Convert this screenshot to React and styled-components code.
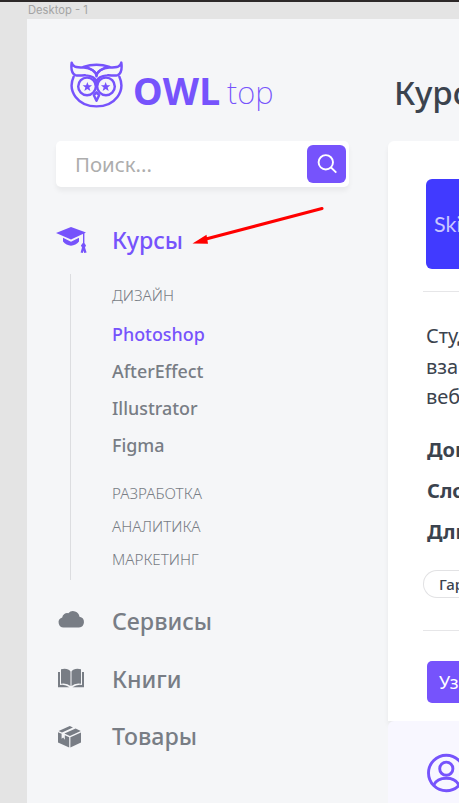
import React from "react";
import styled, { createGlobalStyle } from "styled-components";

const violet = "#7653fc";
const gray = "#787d85";
const ink = "#3b434e";

const GlobalStyle = createGlobalStyle`
  * { box-sizing: border-box; }
  body { margin: 0; font-family: "Noto Sans", "Open Sans", sans-serif; }
`;

const Workspace = styled.div`
  position: relative;
  width: 459px;
  height: 803px;
  overflow: hidden;
  background: #e4e4e4;
  border-top: 2px solid #2c2828;
  padding-left: 27px;
`;

const FrameLabel = styled.div`
  height: 17px;
  padding-left: 1px;
  font: 400 11.2px/17px Inter, sans-serif;
  color: #a3a3a3;
`;

const Frame = styled.div`
  display: grid;
  grid-template-columns: 361px 1fr;
  height: 784px;
  background: #f5f6f8;
`;

const Sidebar = styled.aside`
  padding: 40px 0 0 29px;
`;

const Logo = styled.div`
  display: flex;
  height: 82px;
  padding-left: 13px;
  white-space: nowrap;
  color: ${violet};
  svg { flex: none; margin: 1px 9px 0 0; }
`;

const LogoBold = styled.span`
  font-size: 37.5px;
  font-weight: 700;
  line-height: 63px;
  letter-spacing: 0.4px;
  width: 94px;
`;

const LogoThin = styled.span`
  font-size: 31px;
  font-weight: 200;
  line-height: 66px;
`;

const Search = styled.div`
  display: flex;
  justify-content: space-between;
  align-items: center;
  width: 293px;
  height: 46px;
  padding: 0 3px 0 19px;
  border-radius: 5px;
  background: #fff;
  box-shadow: 0 4px 5px rgba(0, 0, 0, 0.05);
  font-size: 20.4px;
  line-height: 45px;
  color: #adadad;
`;

const SearchButton = styled.button`
  display: grid;
  place-items: center;
  width: 39px;
  height: 38px;
  padding: 0;
  border: 0;
  border-radius: 6px;
  background: ${violet};
`;

const Menu = styled.nav`
  margin-top: 24px;
`;

const MenuItem = styled.div`
  display: flex;
  align-items: center;
  height: 57.5px;
  font-size: 23.2px;
  font-weight: 480;
  color: ${(p) => (p.$active ? violet : gray)};
  svg { flex: none; margin-right: 24px; }
`;

const SubMenu = styled.div`
  height: 306px;
  margin: 5px 0 13px 14px;
  padding: 5px 0 0 41px;
  border-left: 1px solid #dcdde0;
`;

const Category = styled.div`
  height: 33px;
  font-size: 15.2px;
  font-weight: 300;
  line-height: 33px;
  color: ${gray};
`;

const Links = styled.div`
  padding: 4px 0 13px;
`;

const SubLink = styled.div`
  height: 37px;
  font-size: 17.9px;
  font-weight: 480;
  line-height: 36px;
  color: ${(p) => (p.$active ? violet : gray)};
`;

const Main = styled.main`
  min-width: 0;
  white-space: nowrap;
  color: ${ink};
`;

const Title = styled.h1`
  margin: 0;
  height: 122px;
  padding: 49px 0 0 6px;
  font-size: 33px;
  font-weight: 500;
  line-height: 50px;
`;

const Card = styled.section`
  height: 580px;
  padding: 38px 0 0 35px;
  border-radius: 6px 0 0 0;
  background: #fff;
  box-shadow: 0 4px 5px rgba(0, 0, 0, 0.06);
`;

const Cover = styled.div`
  height: 90px;
  margin-left: 3px;
  padding-left: 8px;
  border-radius: 6px 0 0 6px;
  background: #413aff;
  font: 400 21.5px/90px Lato, sans-serif;
  color: #c9c7ff;
`;

const Rule = styled.div`
  height: 1px;
  margin-top: ${(p) => p.$top}px;
  background: #e6e6e8;
`;

const Description = styled.div`
  padding: 29px 0 0 3px;
  font-size: 20px;
  line-height: 30.5px;
`;

const Facts = styled.div`
  padding: 16px 0 1px 4px;
  font-size: 20px;
  font-weight: 700;
  line-height: 41px;
`;

const Chip = styled.div`
  height: 28px;
  margin-top: 17px;
  padding-left: 15px;
  border: 1px solid #e2e2e4;
  border-right: 0;
  border-radius: 14px 0 0 14px;
  font-size: 15px;
  font-weight: 500;
  line-height: 26px;
`;

const Action = styled.div`
  height: 42px;
  margin: 30px 0 0 4px;
  padding-left: 12px;
  border-radius: 5px 0 0 5px;
  background: ${violet};
  color: #fff;
  font-size: 18px;
  line-height: 42px;
`;

const Reviews = styled.section`
  height: 82px;
  padding: 32px 0 0 38px;
  overflow: hidden;
  border-radius: 6px 0 0 0;
  background: #f8f7ff;
`;

const Arrow = styled.svg`
  position: absolute;
  left: 190px;
  top: 203px;
`;

const STAR = "M0-9 L2.4-2.8 9-2.8 3.8 1.3 5.8 8 0 4-5.8 8-3.8 1.3-9-2.8-2.4-2.8Z";

const Owl = () => (
  <svg width="55" height="49" viewBox="16 12 168 150" fill="none" stroke="currentColor" strokeWidth="7.5" strokeLinejoin="round" strokeLinecap="round">
    <path d="M30 63C10 107 43 154 100 154S190 107 170 63" />
    <path d="M60 33Q100 20 140 33" />
    <path d="M24 20C27 33 35 35 61 35C84 36 98 48 100 62C102 48 116 36 139 35C165 35 173 33 176 20C179 42 174 54 165 58C155 62 145 58 132 59C112 60 106 68 100 76C94 68 88 60 68 59C55 58 45 62 35 58C26 54 21 42 24 20Z" />
    <path d="M70 35Q88 40 100 54Q112 40 130 35" strokeWidth="6" />
    <circle cx="71" cy="93" r="27" />
    <circle cx="129" cy="93" r="27" />
    <path d="M100 76V92" />
    <path d="M100 111L92 120 100 137 108 120Z" />
    <path d={STAR} transform="translate(72 94) scale(1.6)" fill="currentColor" stroke="none" />
    <path d={STAR} transform="translate(128 94) scale(1.6)" fill="currentColor" stroke="none" />
  </svg>
);

const CapIcon = () => (
  <svg width="32" height="28" viewBox="0 0 32 28" fill="currentColor">
    <path d="M0 7L15 1 30 6.5 15 13.5Z" />
    <path d="M7 11.8L15 15.8 23 11.8V15.5C19 21 11 21 7 15.5Z" />
    <path d="M27 7H28.4V17L30 19.5 29 21.5 30.6 26.5 28.2 27 27.6 24.5 26.8 27 24.6 26.5 26 21.5 24.9 19.5 27 16.8Z" />
  </svg>
);

const CloudIcon = () => (
  <svg width="32" height="28" viewBox="0 0 32 28" fill="currentColor">
    <path d="M8.5 20.5A5.2 5.2 0 0 1 6.2 10.4A5 5 0 0 1 12.3 6.2A6.5 6.5 0 0 1 23.5 9.8A5.4 5.4 0 0 1 23 20.5Z" />
  </svg>
);

const BooksIcon = () => (
  <svg width="32" height="28" viewBox="0 0 32 28" fill="currentColor">
    <path d="M5 4.2Q12 2.7 14.5 6.5V21Q11 17.7 5 18.7ZM25 4.2Q18 2.7 15.5 6.5V21Q19 17.7 25 18.7Z" />
    <path d="M2 7H4V20Q9 19 13.5 22.3H2ZM28 7H26V20Q21 19 16.5 22.3H28Z" />
  </svg>
);

const BoxIcon = () => (
  <svg width="32" height="28" viewBox="0 0 32 28" fill="currentColor">
    <path d="M2 10.2L5.6 11.8V16.8L7.2 15.6 8.8 17.8V13.2L13.2 15.2V25.5L2 20.5Z" />
    <path d="M14.4 15.2L25 10.5V20.5L14.4 25.5Z" />
    <path d="M2.6 8.9L13.8 4 17 5.4 6 10.4ZM8.4 11.5L19.6 6.6 24.8 9 13.9 14Z" />
  </svg>
);

const PersonIcon = () => (
  <svg width="40" height="40" viewBox="0 0 40 40" fill="none" stroke={violet} strokeWidth="2.9">
    <circle cx="20.3" cy="20" r="17.8" />
    <circle cx="20.3" cy="15.7" r="6.6" />
    <path d="M7.8 32C12 23 28.6 23 32.8 32" />
  </svg>
);

const courses = ["Photoshop", "AfterEffect", "Illustrator", "Figma"];
const categories = ["РАЗРАБОТКА", "АНАЛИТИКА", "МАРКЕТИНГ"];
const sections = [
  ["Сервисы", CloudIcon],
  ["Книги", BooksIcon],
  ["Товары", BoxIcon],
];

export default function App() {
  return (
    <Workspace>
      <GlobalStyle />
      <FrameLabel>Desktop - 1</FrameLabel>
      <Frame>
        <Sidebar>
          <Logo>
            <Owl />
            <LogoBold>OWL</LogoBold>
            <LogoThin>top</LogoThin>
          </Logo>
          <Search>
            Поиск...
            <SearchButton aria-label="Поиск">
              <svg width="22" height="22" viewBox="0 0 22 22" fill="none" stroke="#fff" strokeWidth="1.9">
                <circle cx="9.8" cy="9.3" r="7.2" />
                <path d="M14.8 14.3L20.3 19.6" />
              </svg>
            </SearchButton>
          </Search>
          <Menu>
            <MenuItem $active>
              <CapIcon />
              Курсы
            </MenuItem>
            <SubMenu>
              <Category>ДИЗАЙН</Category>
              <Links>
                {courses.map((name, i) => (
                  <SubLink key={name} $active={i === 0}>{name}</SubLink>
                ))}
              </Links>
              {categories.map((name) => (
                <Category key={name}>{name}</Category>
              ))}
            </SubMenu>
            {sections.map(([name, Icon]) => (
              <MenuItem key={name}>
                <Icon />
                {name}
              </MenuItem>
            ))}
          </Menu>
        </Sidebar>
        <Main>
          <Title>Курс</Title>
          <Card>
            <Cover>Ski</Cover>
            <Rule $top={22} />
            <Description>
              <div>Студ</div>
              <div>вза</div>
              <div>веб</div>
            </Description>
            <Facts>
              <div>Доп</div>
              <div>Сло</div>
              <div>Дли</div>
            </Facts>
            <Chip>Гар</Chip>
            <Rule $top={32} />
            <Action>Уз</Action>
          </Card>
          <Reviews>
            <PersonIcon />
          </Reviews>
        </Main>
      </Frame>
      <Arrow width="136" height="46" viewBox="0 0 136 46">
        <path d="M132 3.5L14 34.5" stroke="#f00" strokeWidth="3" strokeLinecap="round" />
        <path d="M2.5 38.5L16.5 29.8 18 38.8Z" fill="#f00" />
      </Arrow>
    </Workspace>
  );
}
